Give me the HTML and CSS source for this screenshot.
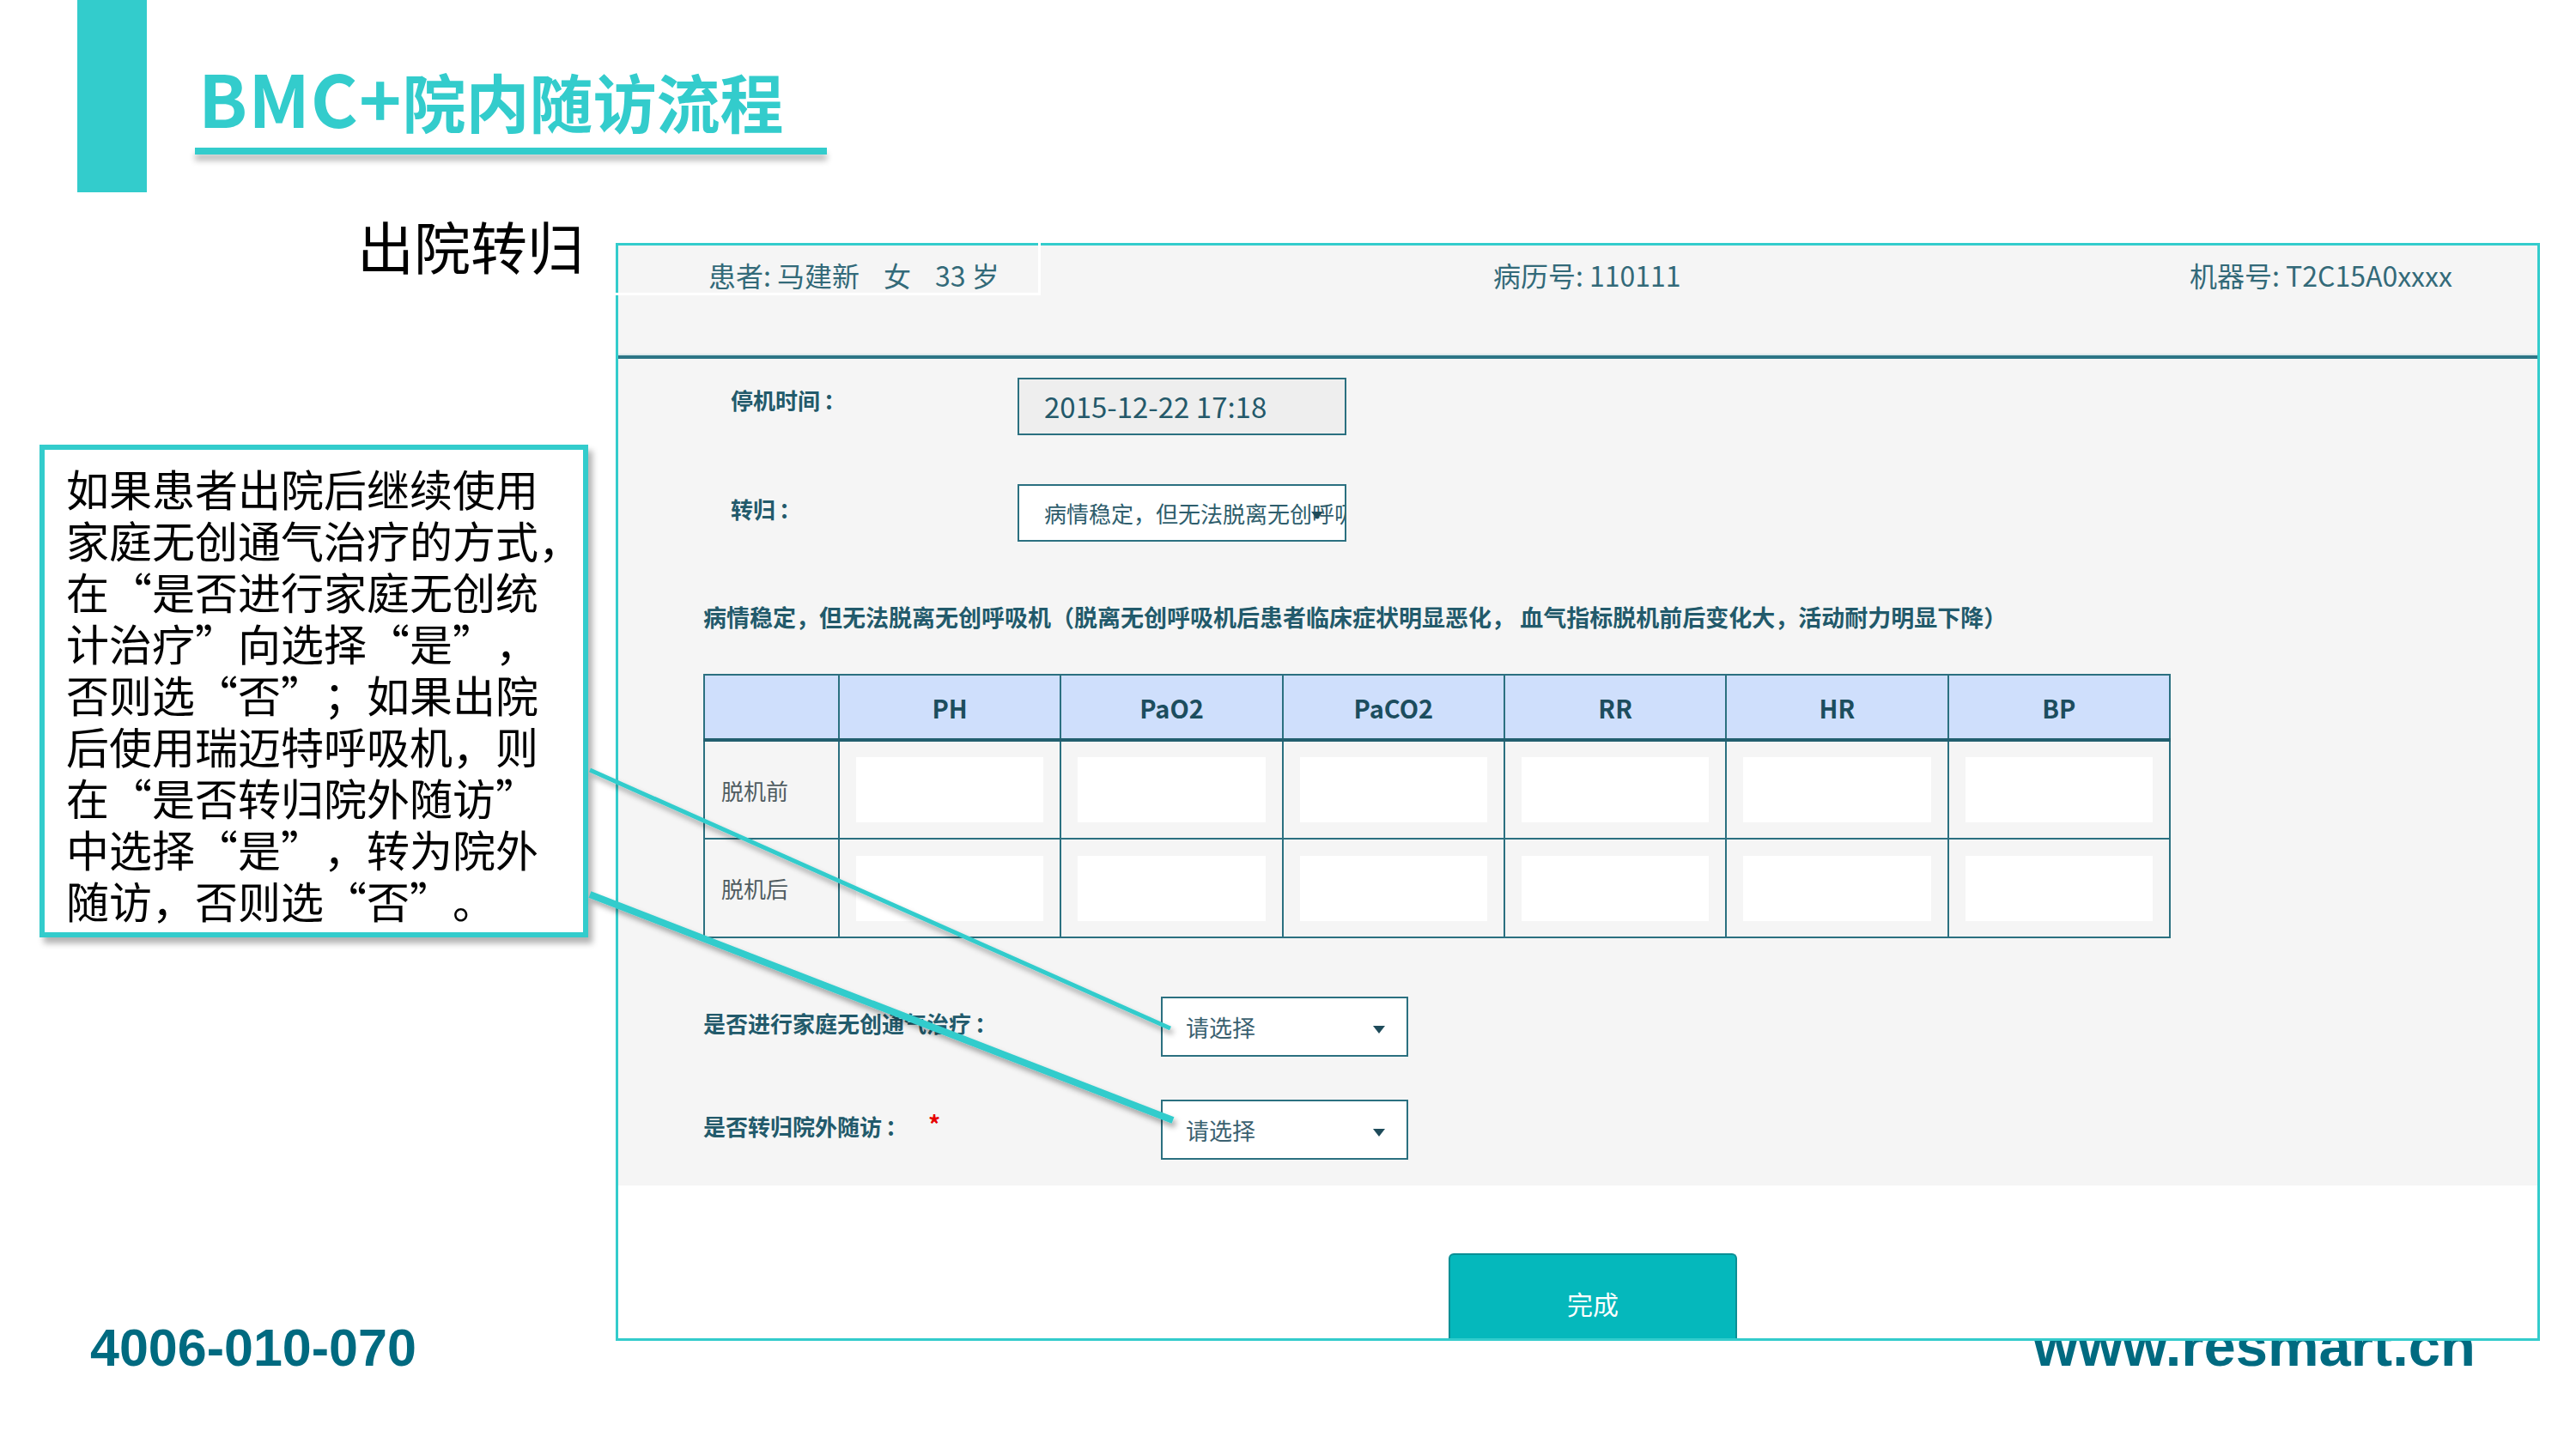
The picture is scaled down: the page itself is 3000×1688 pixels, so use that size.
FILE: index.html
```html
<!DOCTYPE html>
<html lang="zh-CN">
<head>
<meta charset="utf-8">
<title>BMC+院内随访流程</title>
<link rel="stylesheet" href="styles.css">
</head>
<body>
<div class="slide">
  <header class="top">
    <div class="bar"></div>
    <div class="title-block">
      <h1 class="title"><span class="lat">BMC+</span>院内随访流程</h1>
      <div class="title-rule"></div>
    </div>
  </header>

  <div class="main">
    <aside class="side">
      <h2 class="subtitle">出院转归</h2>
      <div class="callout">
        <p>如果患者出院后继续使用<br>家庭无创通气治疗的方式，<br>在“是否进行家庭无创统<br>计治疗”向选择“是”，<br>否则选“否”；如果出院<br>后使用瑞迈特呼吸机，则<br>在“是否转归院外随访”<br>中选择“是”，转为院外<br>随访，否则选“否”。</p>
      </div>
    </aside>

    <section class="panel">
      <div class="ph">
        <span class="sel-mark"></span>
        <div class="ph-item">患者: 马建新<span class="g">女</span><span class="g">33 岁</span></div>
        <div class="ph-item">病历号: 110111</div>
        <div class="ph-item">机器号: T2C15A0xxxx</div>
      </div>

      <div class="pb">
        <div class="frow frow-a r1">
          <label>停机时间<span class="colon">：</span></label>
          <div class="inp date">2015-12-22 17:18</div>
        </div>
        <div class="frow frow-a r2">
          <label>转归<span class="colon">：</span></label>
          <div class="inp sel-inp"><span class="clip">病情稳定，但无法脱离无创呼吸机</span><i class="caret caret-abs"></i></div>
        </div>

        <p class="desc">病情稳定，但无法脱离无创呼吸机（脱离无创呼吸机后患者临床症状明显恶化， 血气指标脱机前后变化大，活动耐力明显下降）</p>

        <table class="grid">
          <colgroup><col class="c0"><col><col><col><col><col><col></colgroup>
          <thead>
            <tr><th></th><th>PH</th><th>PaO2</th><th>PaCO2</th><th>RR</th><th>HR</th><th>BP</th></tr>
          </thead>
          <tbody>
            <tr><td class="rl">脱机前</td><td><div class="ci"></div></td><td><div class="ci"></div></td><td><div class="ci"></div></td><td><div class="ci"></div></td><td><div class="ci"></div></td><td><div class="ci"></div></td></tr>
            <tr><td class="rl">脱机后</td><td><div class="ci"></div></td><td><div class="ci"></div></td><td><div class="ci"></div></td><td><div class="ci"></div></td><td><div class="ci"></div></td><td><div class="ci"></div></td></tr>
          </tbody>
        </table>

        <div class="frow frow-b r3">
          <label>是否进行家庭无创通气治疗<span class="colon">：</span></label>
          <div class="dd"><span>请选择</span><i class="caret"></i></div>
        </div>
        <div class="frow frow-b r4">
          <label>是否转归院外随访<span class="colon">：</span><span class="req">*</span></label>
          <div class="dd"><span>请选择</span><i class="caret"></i></div>
        </div>
      </div>

      <div class="pf">
        <button class="done" type="button">完成</button>
      </div>
    </section>
  </div>

  <footer class="foot">
    <span class="phone">4006-010-070</span>
    <span class="url">www.resmart.cn</span>
  </footer>

  <svg class="links" width="3000" height="1688" viewBox="0 0 3000 1688">
    <defs>
      <filter id="sh" x="-20%" y="-20%" width="140%" height="160%">
        <feDropShadow dx="3" dy="5" stdDeviation="3" flood-color="#000" flood-opacity="0.35"/>
      </filter>
    </defs>
    <g filter="url(#sh)" stroke="#33cccc" fill="none">
      <line x1="687" y1="897" x2="1363" y2="1198" stroke-width="5"/>
      <line x1="687" y1="1042" x2="1366" y2="1305" stroke-width="8"/>
    </g>
  </svg>
</div>
</body>
</html>
```

FILE: styles.css
```css
* { box-sizing: border-box; margin: 0; padding: 0; }
html, body { width: 3000px; height: 1688px; }
body {
  background: #fff;
  font-family: "Noto Sans CJK SC", "Noto Sans", sans-serif;
  text-spacing-trim: space-all;
  overflow: hidden;
}
.slide {
  position: relative;
  width: 3000px;
  height: 1688px;
  overflow: hidden;
  background: #fff;
}

/* ---------- top title ---------- */
.top { display: flex; height: 224px; }
.bar { flex: none; width: 81px; height: 224px; margin-left: 90px; background: #33cccc; }
.title-block { margin-left: 56px; padding-top: 76px; }
.title {
  font-size: 74px;
  line-height: 74px;
  height: 74px;
  font-weight: 700;
  color: #33cccc;
  padding-left: 4px;
  white-space: nowrap;
}
.title .lat { font-size: 84px; letter-spacing: 1px; }
.title-rule {
  margin-top: 22px;
  width: 736px;
  height: 8px;
  background: #33cccc;
  box-shadow: 0 7px 7px rgba(0, 0, 0, 0.28);
}

/* ---------- main ---------- */
.main { display: flex; align-items: flex-start; }
.side { flex: none; width: 717px; }
.subtitle {
  margin-top: 29px;
  margin-left: 416px;
  font-size: 66px;
  line-height: 65px;
  font-weight: 400;
  color: #000;
  white-space: nowrap;
}
.callout {
  margin-top: 200px;
  margin-left: 46px;
  width: 639px;
  height: 574px;
  border: 6px solid #33cccc;
  background: #fff;
  padding: 14px 0 0 25px;
  box-shadow: 5px 7px 7px rgba(0, 0, 0, 0.3);
}
.callout p {
  font-size: 50px;
  line-height: 60px;
  color: #000;
  white-space: nowrap;
}

/* ---------- panel ---------- */
.panel {
  position: relative;
  flex: none;
  margin-top: 59px;
  width: 2241px;
  height: 1279px;
  border: 3px solid #33cccc;
  background: #fff;
  display: flex;
  flex-direction: column;
}
.ph {
  position: relative;
  flex: none;
  height: 132px;
  background: #f5f5f5;
  border-bottom: 4px solid #2d7686;
  box-shadow: inset 0 -2px 0 #dde9ec;
  display: grid;
  grid-template-columns: 914px 811px auto;
  padding: 14px 0 0 105px;
  font-size: 32px;
  line-height: 40px;
  color: #336a79;
  white-space: nowrap;
}
.ph-item .g { margin-left: 28px; }
.sel-mark {
  position: absolute;
  left: -3px;
  top: -3px;
  width: 495px;
  height: 61px;
  border-right: 3px solid #fff;
  border-bottom: 3px solid #fff;
}

.pb {
  flex: none;
  height: 963px;
  background: #f5f5f5;
  padding: 22px 0 0 99px;
}
.frow { display: flex; align-items: flex-start; }
.frow label {
  flex: none;
  font-size: 26px;
  line-height: 36px;
  font-weight: 700;
  color: #225a6b;
  white-space: nowrap;
}
.frow label .colon { margin-left: 4px; }
.frow-a label { width: 334px; margin-left: 32px; }
.frow-b label { width: 533px; margin-top: 13px; }
.r1 label { margin-top: 8px; }
.r2 { margin-top: 57px; }
.r2 label { margin-top: 11px; }
.r3 { margin-top: 68px; }
.r4 { margin-top: 50px; }

.inp {
  width: 383px;
  height: 67px;
  border: 2px solid #2b7080;
  white-space: nowrap;
}
.date {
  background: #eeeeee;
  font-size: 33px;
  line-height: 63px;
  padding-left: 29px;
  color: #24596a;
}
.sel-inp {
  position: relative;
  background: #fff;
  overflow: hidden;
  font-size: 26px;
  line-height: 63px;
  padding-left: 29px;
  color: #2e5d6c;
}
.caret {
  display: block;
  width: 0;
  height: 0;
  border-left: 7px solid transparent;
  border-right: 7px solid transparent;
  border-top: 9px solid #1e4b5a;
}
.caret-abs { position: absolute; right: 25px; top: 30px; }

.desc {
  margin-top: 68px;
  font-size: 27px;
  line-height: 40px;
  font-weight: 700;
  color: #225a6b;
  white-space: nowrap;
}

.grid {
  margin-top: 46px;
  width: 1709px;
  border-collapse: collapse;
  table-layout: fixed;
}
.grid col.c0 { width: 157px; }
.grid th {
  height: 76px;
  background: #cfdffc;
  border: 2px solid #2b7080;
  border-bottom: 4px solid #225f6f;
  font-size: 29px;
  font-weight: 700;
  color: #1c4d5e;
  text-align: center;
  vertical-align: middle;
}
.grid td {
  height: 115px;
  border: 2px solid #2b7080;
  background: #f5f5f5;
  padding: 0 19px;
  vertical-align: middle;
}
.grid td.rl {
  padding-left: 19px;
  font-size: 26px;
  color: #505c61;
  text-align: left;
  white-space: nowrap;
}
.ci { height: 76px; background: #fff; }

.dd {
  display: flex;
  align-items: center;
  width: 288px;
  height: 70px;
  border: 2px solid #2b7080;
  background: #fff;
  font-size: 27px;
  padding-left: 27px;
  color: #3b6170;
  white-space: nowrap;
}
.dd .caret { margin-left: auto; margin-right: 25px; margin-top: 6px; }
.req { margin-left: 24px; color: #e60000; font-weight: 700; font-size: 28px; vertical-align: top; line-height: 30px; }

.pf {
  flex: 1;
  background: #fff;
  padding: 79px 0 0 967px;
}
.done {
  display: block;
  width: 336px;
  height: 99px;
  background: #05b8bc;
  border: 2px solid #0b8f95;
  border-bottom: none;
  border-radius: 6px 6px 0 0;
  color: #fff;
  font-family: "Noto Sans CJK SC", "Noto Sans", sans-serif;
  font-size: 30px;
  padding-top: 14px;
}

/* ---------- footer ---------- */
.foot {
  display: flex;
  align-items: baseline;
  margin-top: -29px;
  padding: 0 117px 0 105px;
  font-family: "Liberation Sans", Arial, sans-serif;
  font-weight: 700;
  color: #006a80;
  line-height: 70px;
  white-space: nowrap;
}
.phone { font-size: 61px; }
.url { margin-left: auto; font-size: 67px; }

/* ---------- connector lines (overlay) ---------- */
.links { position: absolute; left: 0; top: 0; pointer-events: none; }
```
